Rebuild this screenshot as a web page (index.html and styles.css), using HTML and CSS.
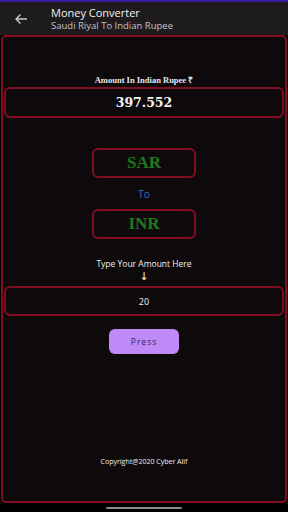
FILE: index.html
```html
<!DOCTYPE html>
<html lang="en">
  <head>
    <meta charset="UTF-8" />
    <meta name="viewport" content="width=device-width, initial-scale=1.0" />
    <title>Money Converter</title>
    <link rel="stylesheet" href="styles.css">
  </head>
  <body>
    <div class="statusbar"></div>
    <header class="toolbar">
      <div class="toolbar-back">
        <svg width="14" height="12" viewBox="0 0 14 12">
          <path d="M13 6H2M6.5 1.5L2 6l4.5 4.5" fill="none" stroke="#c9c9c9" stroke-width="1.4" />
        </svg>
      </div>
      <div class="toolbar-text">
        <div class="toolbar-title">Money Converter</div>
        <div class="toolbar-subtitle">Saudi Riyal To Indian Rupee</div>
      </div>
    </header>

    <main class="panel">
      <div class="result-label">Amount In Indian Rupee ₹</div>
      <div class="box result-box">397.552</div>

      <div class="box currency-box currency-from">SAR</div>
      <div class="to-label">To</div>
      <div class="box currency-box">INR</div>

      <div class="input-label">Type Your Amount Here</div>
      <div class="input-arrow">↓</div>
      <div class="box input-box">20</div>

      <button class="press-btn">Press</button>

      <div class="copyright">Copyright@2020 Cyber Alif</div>
    </main>

    <div class="navbar-bottom">
      <span class="gesture"></span>
    </div>
  </body>
</html>
```

FILE: styles.css
```css
:root {
  --color-border: #820d20;
  --color-panel: #0e0a0c;
  --color-green: #1f7a1b;
  --color-blue: #2a74b5;
}
body {
  margin: 0;
  background: #000;
  color: #fff;
  font-family: "Open Sans", Roboto, sans-serif;
}

.statusbar {
  height: 2px;
  background: #3a1c9e;
}
.toolbar {
  display: flex;
  align-items: center;
  height: 33px;
  background: #1d1b1e;
}
.toolbar-back {
  width: 51px;
  display: flex;
  justify-content: center;
  padding-right: 10px;
  box-sizing: border-box;
}
.toolbar-back svg {
  display: block;
}
.toolbar-text {
  display: flex;
  flex-direction: column;
  gap: 1px;
}
.toolbar-title {
  font-size: 11px;
  line-height: 13px;
  color: #f2f2f2;
}
.toolbar-subtitle {
  font-size: 9.5px;
  line-height: 11px;
  color: #c4c4c4;
}

.panel {
  display: flex;
  flex-direction: column;
  align-items: center;
  height: 468px;
  margin: 0 1px;
  box-sizing: border-box;
  border: 2px solid var(--color-border);
  border-radius: 5px;
  background: var(--color-panel);
}

.box {
  display: flex;
  justify-content: center;
  align-items: center;
  box-sizing: border-box;
  border: 2px solid var(--color-border);
  border-radius: 6px;
}

.result-label {
  margin-top: 38px;
  font-family: "Liberation Serif", serif;
  font-weight: bold;
  font-size: 8.5px;
  line-height: 10px;
  color: #e8e8e8;
}
.result-box {
  align-self: stretch;
  margin: 2px 1px 0;
  height: 31px;
  font-family: "DejaVu Serif", serif;
  font-weight: bold;
  font-size: 12.5px;
  color: #f4f4f4;
}

.currency-box {
  width: 104px;
  height: 30px;
  font-family: "Liberation Serif", serif;
  font-weight: bold;
  font-size: 17px;
  color: var(--color-green);
}
.currency-from {
  margin-top: 30px;
}
.to-label {
  margin: 8px 0 7px;
  font-size: 10.5px;
  line-height: 16px;
  color: var(--color-blue);
}

.input-label {
  margin-top: 19px;
  font-size: 8.5px;
  line-height: 12px;
  color: #f0f0f0;
}
.input-arrow {
  font-family: "DejaVu Sans", sans-serif;
  font-size: 11px;
  line-height: 13px;
  color: #f0f0f0;
}
.input-box {
  align-self: stretch;
  margin: 3px 1px 0;
  height: 30px;
  font-size: 9px;
  color: #f0f0f0;
}

.press-btn {
  margin-top: 13px;
  width: 70px;
  height: 25px;
  border: 0;
  border-radius: 6px;
  background: #bf8af7;
  color: #33234a;
  font-family: "Open Sans", sans-serif;
  font-size: 8.5px;
  letter-spacing: 1px;
}

.copyright {
  margin-top: 103px;
  font-size: 7px;
  line-height: 10px;
  color: #f0f0f0;
}

.navbar-bottom {
  display: flex;
  justify-content: center;
  padding-top: 4px;
}
.gesture {
  width: 76px;
  height: 2px;
  border-radius: 1px;
  background: #8a8a8a;
}
```
